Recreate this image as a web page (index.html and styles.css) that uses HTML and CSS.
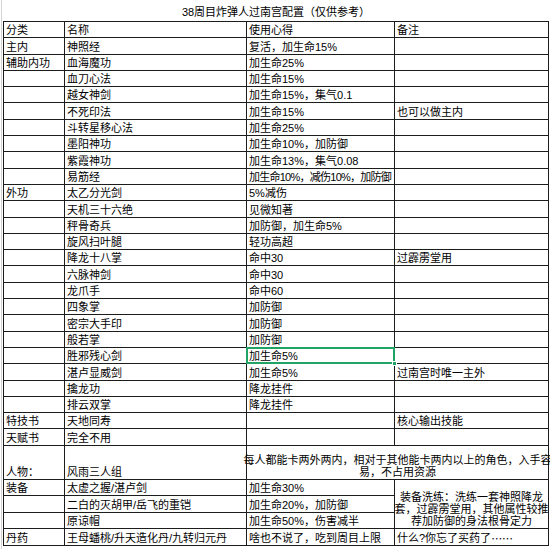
FILE: index.html
```html
<!DOCTYPE html>
<html lang="zh">
<head>
<meta charset="utf-8">
<title>38周目炸弹人过南宫配置</title>
<link rel="stylesheet" href="styles.css">
</head>
<body>
<div class="page">
  <div class="title">38周目炸弹人过南宫配置（仅供参考）</div>
  <div class="sheet">
    <div class="c">分类</div><div class="c">名称</div><div class="c">使用心得</div><div class="c">备注</div>
    <div class="c">主内</div><div class="c">神照经</div><div class="c">复活，加生命15%</div><div class="c"></div>
    <div class="c">辅助内功</div><div class="c">血海魔功</div><div class="c">加生命25%</div><div class="c"></div>
    <div class="c"></div><div class="c">血刀心法</div><div class="c">加生命15%</div><div class="c"></div>
    <div class="c"></div><div class="c">越女神剑</div><div class="c">加生命15%，集气0.1</div><div class="c"></div>
    <div class="c"></div><div class="c">不死印法</div><div class="c">加生命15%</div><div class="c">也可以做主内</div>
    <div class="c"></div><div class="c">斗转星移心法</div><div class="c">加生命25%</div><div class="c"></div>
    <div class="c"></div><div class="c">墨阳神功</div><div class="c">加生命10%，加防御</div><div class="c"></div>
    <div class="c"></div><div class="c">紫霞神功</div><div class="c">加生命13%，集气0.08</div><div class="c"></div>
    <div class="c"></div><div class="c">易筋经</div><div class="c tight">加生命10%，减伤10%，加防御</div><div class="c"></div>
    <div class="c">外功</div><div class="c">太乙分光剑</div><div class="c">5%减伤</div><div class="c"></div>
    <div class="c"></div><div class="c">天机三十六绝</div><div class="c">见微知著</div><div class="c"></div>
    <div class="c"></div><div class="c">秤骨奇兵</div><div class="c">加防御，加生命5%</div><div class="c"></div>
    <div class="c"></div><div class="c">旋风扫叶腿</div><div class="c">轻功高超</div><div class="c"></div>
    <div class="c"></div><div class="c">降龙十八掌</div><div class="c">命中30</div><div class="c">过霹雳堂用</div>
    <div class="c"></div><div class="c">六脉神剑</div><div class="c">命中30</div><div class="c"></div>
    <div class="c"></div><div class="c">龙爪手</div><div class="c">命中60</div><div class="c"></div>
    <div class="c"></div><div class="c">四象掌</div><div class="c">加防御</div><div class="c"></div>
    <div class="c"></div><div class="c">密宗大手印</div><div class="c">加防御</div><div class="c"></div>
    <div class="c"></div><div class="c">般若掌</div><div class="c">加防御</div><div class="c"></div>
    <div class="c"></div><div class="c">胜邪残心剑</div><div class="c selected">加生命5%</div><div class="c"></div>
    <div class="c"></div><div class="c">湛卢显威剑</div><div class="c">加生命5%</div><div class="c">过南宫时唯一主外</div>
    <div class="c"></div><div class="c">擒龙功</div><div class="c">降龙挂件</div><div class="c"></div>
    <div class="c"></div><div class="c">排云双掌</div><div class="c">降龙挂件</div><div class="c"></div>
    <div class="c">特技书</div><div class="c">天地同寿</div><div class="c"></div><div class="c">核心输出技能</div>
    <div class="c">天赋书</div><div class="c">完全不用</div><div class="c"></div><div class="c"></div>
    <div class="c">人物：</div><div class="c">风雨三人组</div><div class="c wrap span2">每人都能卡两外两内，相对于其他能卡两内以上的角色，入手容<br>易，不占用资源</div>
    <div class="c">装备</div><div class="c">太虚之握/湛卢剑</div><div class="c">加生命30%</div><div class="c wrap rows3">装备洗练：洗练一套神照降龙<br>套，过霹雳堂用，其他属性较推<br>荐加防御的身法根骨定力</div>
    <div class="c"></div><div class="c">二白的灭胡甲/岳飞的重铠</div><div class="c">加生命20%，加防御</div>
    <div class="c"></div><div class="c">原谅帽</div><div class="c">加生命50%，伤害减半</div>
    <div class="c">丹药</div><div class="c">王母蟠桃/升天造化丹/九转归元丹</div><div class="c">啥也不说了，吃到周目上限</div><div class="c">什么?你忘了买药了<span class="cjk">……</span></div>
  </div>
  <div class="below"></div>
</div>
</body>
</html>
```

FILE: styles.css
```css
html, body {
  margin: 0;
  padding: 0;
  background: #ffffff;
}

body {
  width: 550px;
  height: 549px;
  overflow: hidden;
  font-family: "Liberation Sans", "Noto Sans CJK SC", sans-serif;
  font-size: 11px;
  color: #000;
}

.page {
  margin-left: 1px;
  border-left: 1px solid #d4d4d4;
  padding-left: 1px;
  height: 549px;
  box-sizing: border-box;
}

.title {
  width: 546px;
  height: 21px;
  display: flex;
  align-items: center;
  justify-content: center;
  line-height: 12px;
  padding-top: 2px;
  box-sizing: border-box;
}

.sheet {
  width: 546px;
  box-sizing: border-box;
  display: grid;
  grid-template-columns: 60px 181px 147px 153px;
  grid-template-rows: repeat(26, 15.3px) 33px repeat(4, 15.5px);
  gap: 1px;
  padding: 1px;
  background: #1c1c1c;
}

.c {
  background: #fff;
  display: flex;
  align-items: flex-end;
  padding: 0 0 1px 2px;
  line-height: 11px;
  white-space: nowrap;
  overflow: visible;
  position: relative;
}

.tight {
  letter-spacing: -0.75px;
}

.cjk {
  font-family: "Noto Sans CJK SC", sans-serif;
}

.wrap {
  justify-content: center;
  text-align: center;
  line-height: 12px;
  padding: 0 1px 1px 1px;
}

.span2 {
  grid-column: span 2;
}

.rows3 {
  grid-row: span 3;
}

.below {
  width: 546px;
  height: 3px;
  border-bottom: 1px solid #d4d4d4;
}

.selected::after {
  content: "";
  position: absolute;
  left: -1px;
  top: -1px;
  right: -1px;
  bottom: -1px;
  border: 2px solid #21a366;
  pointer-events: none;
}

.selected::before {
  content: "";
  position: absolute;
  right: -3px;
  bottom: -3px;
  width: 3px;
  height: 3px;
  background: #21a366;
  border: 1px solid #fff;
  z-index: 2;
}
```
